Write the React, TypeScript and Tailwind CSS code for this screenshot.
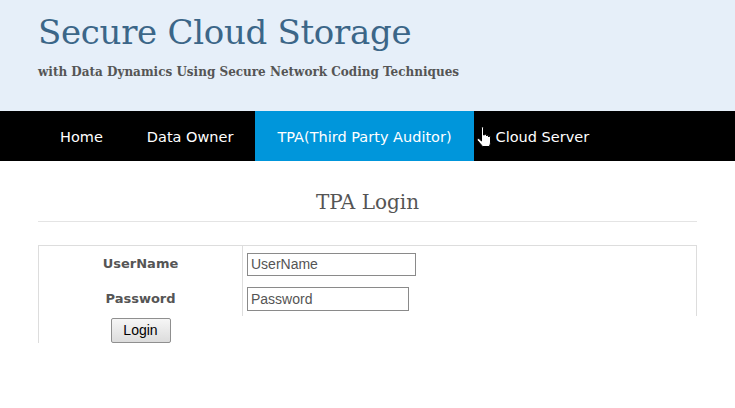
const navItems = [
  { label: 'Home', active: false },
  { label: 'Data Owner', active: false },
  { label: 'TPA(Third Party Auditor)', active: true },
  { label: 'Cloud Server', active: false },
]

const serif = "font-['DejaVu_Serif',Georgia,serif]"

function HandCursor() {
  return (
    <svg
      className="absolute left-[476px] top-[126px]"
      width="15"
      height="22"
      viewBox="0 0 15 22"
    >
      <path
        d="M5.5 1.5C5.5 0.7 7.5 0.7 7.5 1.5L7.5 9L8.5 9C8.5 8 10.5 8 10.5 9L10.5 10C10.5 9 12.5 9 12.5 10L12.5 11C12.5 10 14.5 10 14.5 11L14.5 16C14.5 18 13.8 19.5 13 20.5L6.5 20.5C5.5 18.8 3 16.5 1.5 14.5C0.6 13.2 2 11.8 3.2 12.8L5.5 15Z"
        fill="white"
        stroke="black"
        strokeWidth="1"
        strokeLinejoin="round"
      />
    </svg>
  )
}

export default function App() {
  return (
    <div className="relative w-[735px] h-[408px] bg-white overflow-hidden">
      {/* Header */}
      <header className="h-[111px] bg-[#e6eff9] px-[38px] pt-[8px]">
        <h1 className={`${serif} text-[34px] leading-[48px] text-[#3b6688] tracking-[-0.3px]`}>
          Secure Cloud Storage
        </h1>
        <p className={`${serif} mt-[7px] text-[12px] font-bold text-[#555]`}>
          with Data Dynamics Using Secure Network Coding Techniques
        </p>
      </header>

      {/* Nav */}
      <nav className="h-[50px] bg-black flex pl-[38px] font-['DejaVu_Sans',Verdana,sans-serif] text-[14.5px] text-white">
        {navItems.map((item) => (
          <div
            key={item.label}
            className={`flex items-center pt-[3px] px-[22px] ${item.active ? 'bg-[#0096db]' : ''}`}
          >
            {item.label}
          </div>
        ))}
      </nav>
      <HandCursor />

      {/* Content */}
      <main className="px-[38px]">
        <h2 className={`${serif} text-center text-[20px] leading-[28px] text-[#555] pt-[27px] pb-[5px] border-b border-[#e4e4e4]`}>
          TPA Login
        </h2>

        <div className="mt-[23px] border-l border-t border-[#ddd]">
          <div className="flex border-r border-[#ddd] h-[70px]">
            <div className="w-[203px] flex flex-col font-['DejaVu_Sans',Verdana,sans-serif] font-bold text-[13px] text-[#555]">
              <div className="h-[36px] flex items-center justify-center">UserName</div>
              <div className="h-[34px] flex items-center justify-center">Password</div>
            </div>
            <div className="flex-1 border-l border-[#ddd] flex flex-col pl-[4px] font-['Liberation_Sans',Arial,sans-serif] text-[14px]">
              <div className="h-[36px] flex items-center">
                <input
                  placeholder="UserName"
                  className="w-[169px] h-[23px] border border-[#8a8a8a] px-[3px] placeholder:text-[#555] outline-none"
                />
              </div>
              <div className="h-[34px] flex items-center">
                <input
                  placeholder="Password"
                  className="w-[162px] h-[24px] border border-[#8a8a8a] px-[3px] placeholder:text-[#555] outline-none"
                />
              </div>
            </div>
          </div>
          <div className="w-[203px] flex justify-center pt-[2px]">
            <button className="w-[60px] h-[25px] border border-[#8f8f8f] rounded-[2px] bg-gradient-to-b from-[#f6f6f6] to-[#dcdcdc] font-['Liberation_Sans',Arial,sans-serif] text-[14px] text-black">
              Login
            </button>
          </div>
        </div>
      </main>
    </div>
  )
}
